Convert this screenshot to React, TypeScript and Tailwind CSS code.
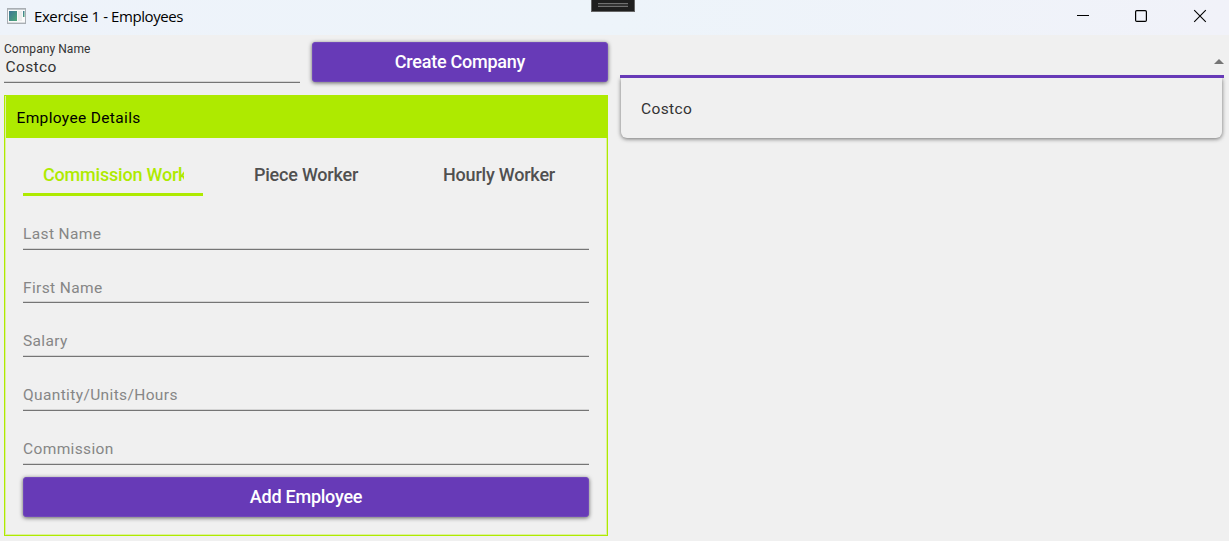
import React from "react";

function AppIcon() {
  return (
    <svg width="20" height="17" viewBox="0 0 20 17" className="shrink-0">
      <defs>
        <linearGradient id="pane" x1="0" y1="0" x2="1" y2="1">
          <stop offset="0" stopColor="#3c7596" />
          <stop offset="1" stopColor="#4fa878" />
        </linearGradient>
      </defs>
      <rect x="0.5" y="0.5" width="18" height="15" fill="#fafafa" stroke="#a9aeb3" />
      <rect x="1" y="1" width="17" height="1" fill="#c3c8cc" />
      <rect x="2" y="3" width="8" height="10" fill="url(#pane)" />
      <rect x="11" y="3" width="4" height="10" fill="#ececec" />
      <rect x="16" y="3" width="1.5" height="6" fill="url(#pane)" />
      <rect x="1" y="14" width="17" height="1" fill="#d9dcde" />
    </svg>
  );
}

function TitleBar() {
  return (
    <header className="relative flex h-[35px] shrink-0 items-start justify-between bg-linear-to-r from-[#eef3fa] via-[#edf4fa] to-[#f1f2f9]">
      <div className="flex pl-[7px] pt-2">
        <AppIcon />
        <h1 className="-mt-[3px] ml-[7px] whitespace-nowrap font-['Open_Sans','Noto_Sans',sans-serif] text-[15px] leading-[22px] tracking-[-0.41px] text-black">
          Exercise 1 - Employees
        </h1>
      </div>
      <div className="absolute left-[591px] top-0 flex h-3 w-11 flex-col items-center border border-t-0 border-[#656565] bg-[#1f1f1f] pt-[3px]">
        <div className="h-[4px] w-[30px] border-y border-[#707070] bg-[#333]" />
      </div>
      <div className="flex pr-[22px] pt-[9px]">
        <svg width="14" height="14" viewBox="0 0 14 14" stroke="#000" fill="none">
          <path d="M1 6.5H13" />
        </svg>
        <svg width="14" height="14" viewBox="0 0 14 14" stroke="#000" fill="none" strokeWidth="1.2" className="ml-11">
          <rect x="1.6" y="1.6" width="10.8" height="10.8" rx="1.2" />
        </svg>
        <svg width="14" height="14" viewBox="0 0 14 14" stroke="#000" fill="none" strokeWidth="1.1" className="ml-[45px]">
          <path d="M1.2 1.2L12.8 12.8M12.8 1.2L1.2 12.8" />
        </svg>
      </div>
    </header>
  );
}

function RaisedButton({ children }: { children: React.ReactNode }) {
  return (
    <button className="flex h-10 w-full items-center justify-center rounded-[3px] border border-[#7148bb] bg-[#673ab7] pb-[2px] text-[18px] font-medium tracking-[-0.24px] text-white shadow-[0_1px_4px_rgba(0,0,0,0.6)]">
      {children}
    </button>
  );
}

function Field({ label, short }: { label: string; short?: boolean }) {
  return (
    <div
      className={`flex items-end border-b border-[#757575] text-[15.5px] leading-[20px] tracking-[0.37px] text-[#868686] shadow-[inset_0_-1px_0_#d4d4d4] ${short ? "h-[53px] pb-1" : "h-[54px] pb-[5px]"}`}
    >
      {label}
    </div>
  );
}

const fields = ["Last Name", "First Name", "Salary", "Quantity/Units/Hours", "Commission"];

function EmployeeCard() {
  return (
    <section className="mt-[13px] flex h-[441px] flex-col border border-solid border-[#aeea00] shadow-[inset_0_0_0_1px_#dcef9f]">
      <h2 className="ml-px h-[42px] bg-[#aeea00] pl-[10.5px] pt-[11px] text-[15.5px] leading-[22px] tracking-[0.35px] text-black">
        Employee Details
      </h2>
      <div className="flex flex-col px-[18px] pt-4">
        <div className="grid h-[42px] grid-cols-[180px_206px_180px] text-[18px] font-medium tracking-[-0.2px] text-[#505050]">
          <div className="h-[42px] border-b-[3px] border-[#aeea00] pl-5 pr-[19px] text-[#aeea00]">
            <div className="overflow-hidden whitespace-nowrap leading-[41px]">Commission Worker</div>
          </div>
          <div className="text-center leading-[41px]">Piece Worker</div>
          <div className="text-center leading-[41px]">Hourly Worker</div>
        </div>
        <div>
          {fields.map((f, i) => (
            <Field key={f} label={f} short={i === 1} />
          ))}
        </div>
        <div className="mt-3">
          <RaisedButton>Add Employee</RaisedButton>
        </div>
      </div>
    </section>
  );
}

function CompanyPicker() {
  return (
    <div className="ml-3 flex w-[604px] flex-col">
      <div className="relative z-10 flex h-[43px] items-end justify-end border-b-[3px] border-[#673ab7] pb-[11px]">
        <svg width="10" height="5" viewBox="0 0 10 5">
          <path d="M0 5L5 0L10 5Z" fill="#757575" />
        </svg>
      </div>
      <div className="ml-px mr-[2px] flex h-[60px] items-center rounded-b-[6px] bg-[#f0f0f0] pl-5 pt-[4px] text-[15.5px] tracking-[0.37px] text-[#333] shadow-[0_1px_4px_rgba(0,0,0,0.55)]">
        Costco
      </div>
    </div>
  );
}

export default function App() {
  return (
    <div className="flex h-[541px] w-[1229px] flex-col overflow-hidden bg-[#f0f0f0] font-[Roboto,sans-serif]">
      <TitleBar />
      <main className="flex pl-1">
        <div className="w-[604px]">
          <div className="flex h-[47px] justify-between">
            <div className="flex h-12 w-[296px] flex-col border-b border-[#757575] shadow-[inset_0_-1px_0_#d4d4d4]">
              <label className="pt-[6px] text-[12px] leading-4 tracking-[0.06px] text-[#333]">Company Name</label>
              <span className="pl-[1.5px] text-[15.5px] leading-5 tracking-[0.37px] text-[#333]">Costco</span>
            </div>
            <div className="w-[296px] pt-[7px]">
              <RaisedButton>Create Company</RaisedButton>
            </div>
          </div>
          <EmployeeCard />
        </div>
        <CompanyPicker />
      </main>
    </div>
  );
}
